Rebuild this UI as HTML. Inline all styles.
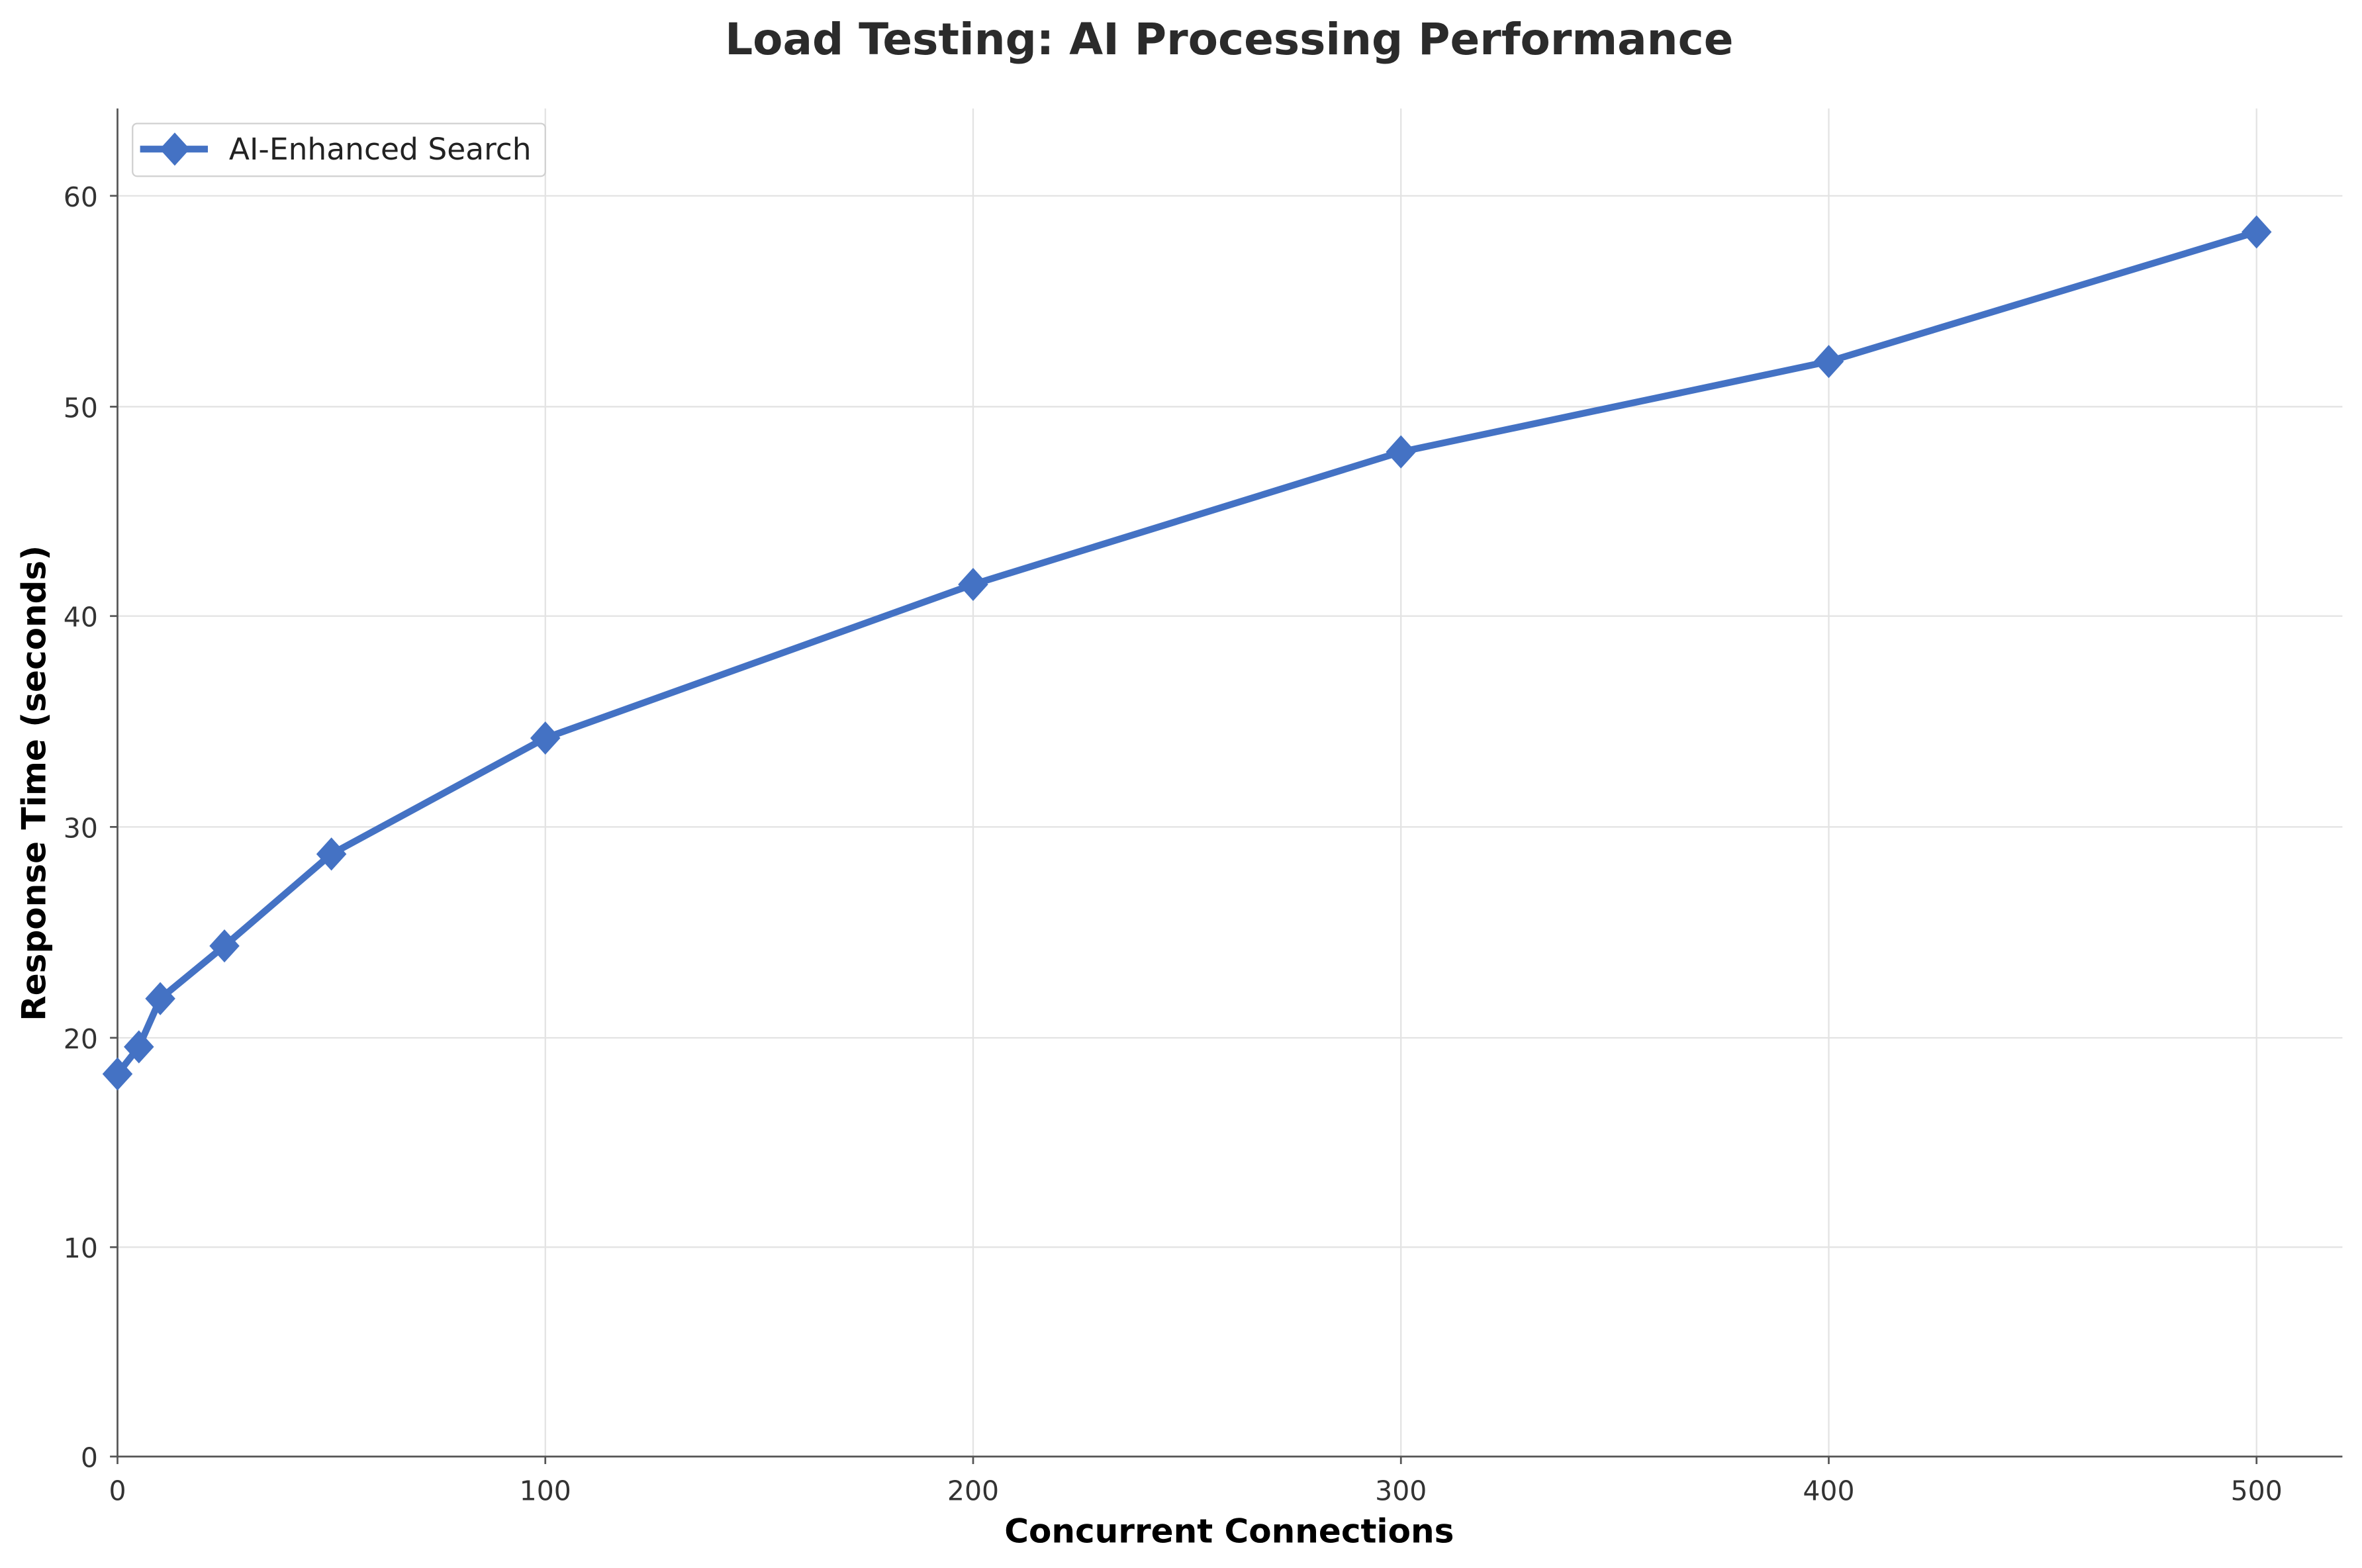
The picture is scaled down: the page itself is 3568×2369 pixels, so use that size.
<!DOCTYPE html>
<html><head><meta charset="utf-8"><style>
html,body{margin:0;padding:0;background:#fff;}
svg{display:block;}
</style></head><body>
<svg width="3568" height="2369" viewBox="0 0 1568 1041" preserveAspectRatio="none" xmlns="http://www.w3.org/2000/svg" font-family="'DejaVu Sans','Liberation Sans',sans-serif">
<rect width="1568" height="1041" fill="#fff"/>
<g stroke="#e3e3e3" stroke-width="1">
<line x1="78" y1="828" x2="1555" y2="828"/><line x1="78" y1="689" x2="1555" y2="689"/><line x1="78" y1="549" x2="1555" y2="549"/><line x1="78" y1="409" x2="1555" y2="409"/><line x1="78" y1="270" x2="1555" y2="270"/><line x1="78" y1="130" x2="1555" y2="130"/>
<line x1="362" y1="72" x2="362" y2="967"/><line x1="646" y1="72" x2="646" y2="967"/><line x1="930" y1="72" x2="930" y2="967"/><line x1="1214" y1="72" x2="1214" y2="967"/><line x1="1498" y1="72" x2="1498" y2="967"/>
</g>
<g stroke="#555" stroke-width="1.2">
<line x1="78" y1="72" x2="78" y2="967"/><line x1="78" y1="967" x2="1555" y2="967"/>
<line x1="73" y1="967" x2="78" y2="967"/><line x1="73" y1="828" x2="78" y2="828"/><line x1="73" y1="689" x2="78" y2="689"/><line x1="73" y1="549" x2="78" y2="549"/><line x1="73" y1="409" x2="78" y2="409"/><line x1="73" y1="270" x2="78" y2="270"/><line x1="73" y1="130" x2="78" y2="130"/>
<line x1="78" y1="967" x2="78" y2="972"/><line x1="362" y1="967" x2="362" y2="972"/><line x1="646" y1="967" x2="646" y2="972"/><line x1="930" y1="967" x2="930" y2="972"/><line x1="1214" y1="967" x2="1214" y2="972"/><line x1="1498" y1="967" x2="1498" y2="972"/>
</g>
<g fill="#333" font-size="18" text-anchor="end">
<text x="65" y="974">0</text><text x="65" y="835">10</text><text x="65" y="696">20</text><text x="65" y="556">30</text><text x="65" y="416">40</text><text x="65" y="277">50</text><text x="65" y="137">60</text>
</g>
<g fill="#333" font-size="18" text-anchor="middle">
<text x="78" y="996">0</text><text x="362" y="996">100</text><text x="646" y="996">200</text><text x="930" y="996">300</text><text x="1214" y="996">400</text><text x="1498" y="996">500</text>
</g>
<text x="816" y="1024" text-anchor="middle" font-size="22" font-weight="bold" fill="#000">Concurrent Connections</text>
<text transform="translate(30,520) rotate(-90)" text-anchor="middle" font-size="22" font-weight="bold" fill="#000">Response Time (seconds)</text>
<text x="816" y="36" text-anchor="middle" font-size="29" font-weight="bold" fill="#2b2b2b">Load Testing: AI Processing Performance</text>
<polyline fill="none" stroke="#4472C4" stroke-width="4.5" stroke-linejoin="round" points="78,713 92.2,695 106.4,663 149,628 220,567 362,490 646,388 930,300 1214,240 1498,154"/>
<g fill="#4472C4">
<path d="M78,702 l10,11 l-10,11 l-10,-11z"/>
<path d="M92.2,684 l10,11 l-10,11 l-10,-11z"/>
<path d="M106.4,652 l10,11 l-10,11 l-10,-11z"/>
<path d="M149,617 l10,11 l-10,11 l-10,-11z"/>
<path d="M220,556 l10,11 l-10,11 l-10,-11z"/>
<path d="M362,479 l10,11 l-10,11 l-10,-11z"/>
<path d="M646,377 l10,11 l-10,11 l-10,-11z"/>
<path d="M930,289 l10,11 l-10,11 l-10,-11z"/>
<path d="M1214,229 l10,11 l-10,11 l-10,-11z"/>
<path d="M1498,143 l10,11 l-10,11 l-10,-11z"/>
</g>
<rect x="88" y="82" width="274" height="35" rx="3" fill="#fff" fill-opacity="0.8" stroke="#d0d0d0" stroke-width="1"/>
<line x1="93" y1="99" x2="138" y2="99" stroke="#4472C4" stroke-width="4.5"/>
<path d="M116,88 l10,11 l-10,11 l-10,-11z" fill="#4472C4"/>
<text x="152" y="106" font-size="20" fill="#222">AI-Enhanced Search</text>
</svg>
</body></html>
